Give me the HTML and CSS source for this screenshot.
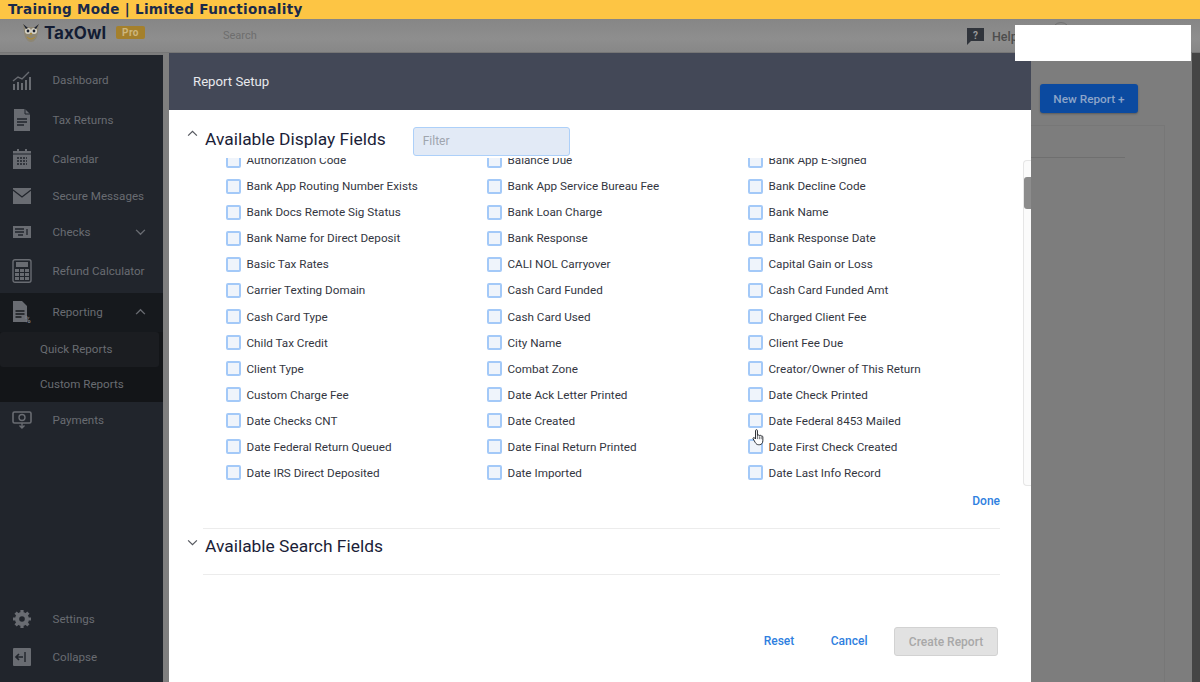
FILE: index.html
```html
<!DOCTYPE html>
<html lang="en">
<head>
<meta charset="utf-8">
<title>Report Setup</title>
<link rel="stylesheet" href="styles.css">
</head>
<body>
<div class="banner">Training Mode | Limited Functionality</div>
<div class="app">
  <header class="topbar">
    <div class="logo">
      <svg class="owl" viewBox="0 0 18 20"><path d="M1 1l4 3h8l4-3-1 7c0 6-3 11-7 11S2 14 2 8z" fill="#8d8674"/><circle cx="6" cy="8" r="3" fill="#d8d4c6"/><circle cx="12" cy="8" r="3" fill="#d8d4c6"/><circle cx="6" cy="8" r="1.4" fill="#1c2333"/><circle cx="12" cy="8" r="1.4" fill="#1c2333"/><path d="M8 10h2l-1 3z" fill="#b08a2e"/><path d="M5 14q4 4 8 0" stroke="#b08a2e" fill="none"/><path d="M1 1l5 4-2 1zM17 1l-5 4 2 1z" fill="#1c2333"/></svg>
      <span class="logo-name">TaxOwl</span>
      <span class="logo-pro">Pro</span>
    </div>
    <div class="search">Search</div>
    <div class="help">
      <svg class="help-icon" viewBox="0 0 18 18"><path d="M0 1h17v13H4l-4 4z" fill="#30343b"/><text x="8.5" y="11.5" class="help-q">?</text></svg>
      <span>Help</span>
    </div>
    <span class="avatar"></span>
  </header>
  <div class="below">
    <nav class="sidebar">
      <a class="nav h40"><svg viewBox="0 0 20 20" class="ni"><path d="M1 11l5-4 4 2 7-7" fill="none" stroke="currentColor" stroke-width="1.4"/><path d="M1 14h2v6H1zM5 12h2v8H5zM9 13h2v7H9zM13 10h2v10h-2zM17 7h2v13h-2z" fill="currentColor"/></svg><span>Dashboard</span></a>
      <a class="nav h40"><svg viewBox="0 0 20 24" class="ni tall"><path d="M2 1h11l5 5v17H2z" fill="currentColor"/><path d="M5 11h10M5 14h10M5 17h7" stroke="#21252c" stroke-width="1.4"/><path d="M13 1v5h5" fill="none" stroke="#21252c"/></svg><span>Tax Returns</span></a>
      <a class="nav h38"><svg viewBox="0 0 20 20" class="ni"><path d="M1 2h18v18H1z" fill="currentColor"/><path d="M5 0h2v3H5zM13 0h2v3h-2z" fill="currentColor"/><path d="M1 5h18" stroke="#21252c"/><path d="M5 9h10M5 12h10M5 15h10" stroke="#21252c" stroke-width="1.5" stroke-dasharray="2 1"/></svg><span>Calendar</span></a>
      <a class="nav h36"><svg viewBox="0 0 20 16" class="ni"><path d="M1 0h18v16H1z" fill="currentColor"/><path d="M1 2l9 7 9-7" fill="none" stroke="#21252c" stroke-width="1.3"/></svg><span>Secure Messages</span></a>
      <a class="nav h36"><svg viewBox="0 0 20 12" class="ni"><path d="M1 0h18v12H1z" fill="currentColor"/><path d="M3 3h9M3 6h9M6 9h5M15 3v6" stroke="#21252c" stroke-width="1.3"/></svg><span>Checks</span><svg class="chev" viewBox="0 0 12 8"><path d="M1 1l5 5 5-5" fill="none" stroke="currentColor" stroke-width="1.6"/></svg></a>
      <a class="nav h43 lift"><svg viewBox="0 0 20 24" class="ni tall"><rect x="1" y="0.7" width="18" height="22.6" rx="2" fill="none" stroke="currentColor" stroke-width="1.4"/><path d="M4 3h12v5H4z" fill="currentColor"/><path d="M3 10h4v3H3zM8 10h4v3H8zM13 10h4v3h-4zM3 14h4v3H3zM8 14h4v3H8zM13 14h4v3h-4zM3 18h4v3H3zM8 18h4v3H8zM13 18h4v3h-4z" fill="currentColor"/></svg><span>Refund Calculator</span></a>
      <a class="nav h39 open"><svg viewBox="0 0 20 22" class="ni tall"><path d="M1 0h9l5 5v16H1z" fill="currentColor"/><path d="M3.5 10h9M3.5 13h9M3.5 16h6" stroke="#16191d" stroke-width="1.3"/><text x="12.5" y="21.5" class="pct">%</text></svg><span>Reporting</span><svg class="chev" viewBox="0 0 12 8"><path d="M1 7l5-5 5 5" fill="none" stroke="currentColor" stroke-width="1.6"/></svg></a>
      <div class="subnav">
        <a class="sub current">Quick Reports</a>
        <a class="sub">Custom Reports</a>
      </div>
      <a class="nav h36"><svg viewBox="0 0 20 18" class="ni"><rect x="1" y="1" width="18" height="11" rx="1.5" fill="none" stroke="currentColor" stroke-width="1.6"/><circle cx="10" cy="6.5" r="3" fill="none" stroke="currentColor" stroke-width="1.4"/><path d="M10 12v5M7.5 14.5L10 17l2.5-2.5" fill="none" stroke="currentColor" stroke-width="1.4"/></svg><span>Payments</span></a>
      <div class="nav-spacer"></div>
      <a class="nav h38"><svg viewBox="0 0 20 20" class="ni"><circle cx="10" cy="10" r="5.2" fill="none" stroke="currentColor" stroke-width="3.6"/><path d="M10 1v18M1 10h18M3.6 3.6l12.8 12.8M16.4 3.6L3.6 16.4" stroke="currentColor" stroke-width="3.2"/><circle cx="10" cy="10" r="2.8" fill="#21252c"/></svg><span>Settings</span></a>
      <a class="nav h38"><svg viewBox="0 0 20 20" class="ni"><rect x="1" y="1" width="18" height="18" rx="1" fill="currentColor"/><path d="M13 5v10" stroke="#21252c" stroke-width="1.4"/><path d="M11 10H4M7 7l-3 3 3 3" fill="none" stroke="#21252c" stroke-width="1.7"/></svg><span>Collapse</span></a>
    </nav>
    <main class="content">
      <div class="content-top"><button class="new-report">New Report +</button></div>
      <div class="card"><div class="card-line"></div></div>
    </main>
    <div class="page-scroll"></div>
  </div>

  <section class="modal">
    <div class="modal-head">Report Setup</div>
    <div class="sect-head">
      <svg class="sect-chev" viewBox="0 0 12 8"><path d="M1 6.5l5-5 5 5" fill="none" stroke="currentColor" stroke-width="1.4"/></svg>
      <h2>Available Display Fields</h2>
      <div class="filter">Filter</div>
    </div>
    <div class="fields-wrap">
      <div class="fields-view">
        <div class="fields">
          <label class="f"><i></i>Authorization Code</label><label class="f"><i></i>Balance Due</label><label class="f"><i></i>Bank App E-Signed</label>
          <label class="f"><i></i>Bank App Routing Number Exists</label><label class="f"><i></i>Bank App Service Bureau Fee</label><label class="f"><i></i>Bank Decline Code</label>
          <label class="f"><i></i>Bank Docs Remote Sig Status</label><label class="f"><i></i>Bank Loan Charge</label><label class="f"><i></i>Bank Name</label>
          <label class="f"><i></i>Bank Name for Direct Deposit</label><label class="f"><i></i>Bank Response</label><label class="f"><i></i>Bank Response Date</label>
          <label class="f"><i></i>Basic Tax Rates</label><label class="f"><i></i>CALI NOL Carryover</label><label class="f"><i></i>Capital Gain or Loss</label>
          <label class="f"><i></i>Carrier Texting Domain</label><label class="f"><i></i>Cash Card Funded</label><label class="f"><i></i>Cash Card Funded Amt</label>
          <label class="f"><i></i>Cash Card Type</label><label class="f"><i></i>Cash Card Used</label><label class="f"><i></i>Charged Client Fee</label>
          <label class="f"><i></i>Child Tax Credit</label><label class="f"><i></i>City Name</label><label class="f"><i></i>Client Fee Due</label>
          <label class="f"><i></i>Client Type</label><label class="f"><i></i>Combat Zone</label><label class="f"><i></i>Creator/Owner of This Return</label>
          <label class="f"><i></i>Custom Charge Fee</label><label class="f"><i></i>Date Ack Letter Printed</label><label class="f"><i></i>Date Check Printed</label>
          <label class="f"><i></i>Date Checks CNT</label><label class="f"><i></i>Date Created</label><label class="f"><i></i>Date Federal 8453 Mailed</label>
          <label class="f"><i></i>Date Federal Return Queued</label><label class="f"><i></i>Date Final Return Printed</label><label class="f"><i></i>Date First Check Created</label>
          <label class="f"><i></i>Date IRS Direct Deposited</label><label class="f"><i></i>Date Imported</label><label class="f"><i></i>Date Last Info Record</label>
        </div>
      </div>
      <div class="vscroll"><div class="vthumb"></div></div>
    </div>
    <div class="done-row"><a class="link">Done</a></div>
    <div class="sect-head second">
      <svg class="sect-chev" viewBox="0 0 12 8"><path d="M1 1.5l5 5 5-5" fill="none" stroke="currentColor" stroke-width="1.4"/></svg>
      <h2>Available Search Fields</h2>
    </div>
    <div class="foot">
      <a class="link">Reset</a>
      <a class="link">Cancel</a>
      <button class="create" disabled>Create Report</button>
    </div>
  </section>

  <div class="mask"></div>
  <svg class="hand" viewBox="0 0 12 16"><path d="M3.2 1.6c0-1.3 1.8-1.3 1.8 0v4.6c.2-.9 1.8-.8 1.8.2.3-.8 1.7-.6 1.7.4.4-.6 1.6-.3 1.6.7v3.5c0 2.2-1.2 3.8-3.2 3.8H6c-1.4 0-2.2-.8-3-2L1 9.4c-.6-1 .6-1.8 1.4-1l.8 1z" fill="#fff" stroke="#22262c" stroke-width="0.9"/><path d="M5 6.5v3M6.8 6.8v2.8M8.5 7.2v2.4" stroke="#22262c" stroke-width=".6"/></svg>
</div>
</body>
</html>
```
FILE: styles.css
```css
* { box-sizing: border-box; }
html, body { margin: 0; height: 100%; overflow: hidden; }
body { font-family: Roboto, "Liberation Sans", sans-serif; font-size: 12px; background: #7d7d7d; }

.banner {
  height: 19px; padding-left: 8px; background: #fdc544; color: #1a2a4a;
  font: bold 13.5px/18px "DejaVu Sans", sans-serif; letter-spacing: .3px; white-space: nowrap;
}
.app { position: relative; height: 663px; display: flex; flex-direction: column; }

.topbar { height: 34px; flex: none; display: flex; align-items: center; background: linear-gradient(#868686, #8e8e8e 60%, #878787); border-bottom: 1px solid #767676; position: relative; }
.logo { display: flex; align-items: center; width: 223px; padding: 0 0 6px 22px; }
.owl { width: 18px; height: 20px; margin-right: 4px; }
.logo-name { font: bold 17px/20px Inter, Roboto, sans-serif; color: #131c33; width: 67px; white-space: nowrap; }
.logo-pro { margin-left: 5px; width: 29px; height: 13px; border-radius: 2px; background: #a4802c; color: #cdb67c; font: bold 10px/13px Roboto, sans-serif; text-align: center; letter-spacing: .4px; }
.search { flex: 1; font-size: 11px; color: #6e6e6e; }
.help { display: flex; align-items: center; gap: 7px; position: absolute; left: 967px; top: 8px; font: 500 12.5px/17px Roboto, sans-serif; color: #4d4d4d; }
.help-icon { width: 18px; height: 18px; }
.help-q { font: bold 10px Roboto, sans-serif; fill: #9a9a9a; text-anchor: middle; }
.avatar { position: absolute; left: 1052px; top: 3px; width: 18px; height: 18px; border-radius: 50%; border: 1px solid #707070; }

.below { flex: 1; display: flex; min-height: 0; padding-top: 2px; }
.sidebar { width: 163px; flex: none; background: #21252c; color: #696c72; display: flex; flex-direction: column; padding: 5px 0 6px; }
.nav { display: flex; align-items: center; padding: 0 17px 0 12px; font-size: 11.6px; }
.nav > span { margin-left: 20.5px; flex: 1; white-space: nowrap; }
.h36 { height: 36px; } .h38 { height: 38px; } .h39 { height: 39px; } .h40 { height: 40px; } .h43 { height: 43px; }
.lift { padding-bottom: 2px; }
.ni { width: 20px; height: 20px; flex: none; }
.ni.tall { height: 24px; }
.chev { width: 11px; height: 7px; flex: none; }
.pct { font: bold 8.5px Roboto, sans-serif; fill: #7b7e84; }
.open { background: #16191d; padding-bottom: 2px; }
.subnav { background: #131518; padding: 0 4px 0 0; }
.sub { display: block; height: 35px; line-height: 35px; padding-left: 40px; font-size: 11.6px; }
.current { background: #1b1d21; border-radius: 3px; }
.nav-spacer { flex: 1; }

.content { flex: 1; padding: 29px 27px 0 0; background: #7d7d7d; display: flex; flex-direction: column; }
.content-top { display: flex; justify-content: flex-end; padding-right: 27px; }
.new-report { width: 98px; height: 29px; border: 0; border-radius: 3px; background: #0b4aa0; color: #8da5c9; font: 500 11.8px Roboto, sans-serif; box-shadow: 0 1px 2px #5a5a5a; }
.card { flex: 1; margin-top: 12px; border-top: 1px solid #777; border-right: 1px solid #777; padding-top: 31px; }
.card-line { height: 1px; background: #6f6f6f; margin: 0 39px 0 0; }
.page-scroll { width: 8px; flex: none; background: #454545; margin-top: -2px; }

.modal {
  position: absolute; left: 169px; top: 34px; width: 862px; height: 629px;
  background: #fff; display: flex; flex-direction: column; color: #33363f;
  box-shadow: -6px 0 0 #7f7f7f;
}
.modal-head { height: 57px; flex: none; background: #434857; color: #e8e9ec; font-size: 13.2px; line-height: 58px; padding-left: 24px; }
.sect-head { height: 48px; flex: none; display: flex; align-items: flex-start; padding: 17px 0 0 18px; color: #1b1e38; }
.sect-chev { width: 11px; height: 7px; margin-top: 3px; color: #55585f; flex: none; }
.sect-head h2 { margin: 0 0 0 7px; font: 400 17.4px/24px Roboto, sans-serif; white-space: nowrap; }
.filter { width: 157px; height: 29px; margin-left: 27px; border: 1px solid #add0f9; border-radius: 3px; background: #e2eaf6; color: #9fa5ae; font-size: 12px; line-height: 27px; padding-left: 9px; }

.fields-wrap { height: 329px; flex: none; display: flex; }
.fields-view { flex: 1; overflow: hidden; min-width: 0; }
.fields { margin-top: -11px; padding-left: 56.5px; display: grid; grid-template-columns: repeat(3, 261px); grid-auto-rows: 26.09px; }
.f { display: flex; align-items: center; white-space: nowrap; font-size: 11.7px; }
.f i { width: 15px; height: 15px; flex: none; margin-right: 6px; border: 2px solid #a3c9f8; border-radius: 2px; background: #eff4fb; }
.vscroll { width: 8px; flex: none; margin: 2px 0 1px; background: #fbfbfb; border: 1px solid #e6e6e6; border-right: 0; border-radius: 4px 0 0 4px; padding-top: 16px; }
.vthumb { height: 32px; background: #8c8c8c; border-radius: 3px 0 0 3px; }

.done-row { height: 41px; flex: none; display: flex; justify-content: flex-end; align-items: flex-start; padding: 7px 31px 0 0; }
.link { color: #2f7fe0; font: 500 12px/15px Roboto, sans-serif; }
.sect-head.second { margin: 0 31px 0 34px; padding: 5px 0 0 0; height: 47px; border-top: 1px solid #ececec; border-bottom: 1px solid #ececec; }
.second .sect-chev { margin-left: -16px; margin-top: 5px; }
.foot { flex: none; display: flex; justify-content: flex-end; align-items: center; gap: 36.5px; margin-top: 52px; padding-right: 33px; }
.create { width: 104px; height: 29px; margin-left: -10px; border: 1px solid #d2d2d2; border-radius: 3px; background: #e2e2e2; color: #a8a8a8; font: 500 12px Roboto, sans-serif; }

.mask { position: absolute; left: 1015px; top: 6px; width: 176px; height: 36px; background: #fff; }
.hand { position: absolute; left: 752px; top: 410px; width: 13px; height: 17px; }
```
